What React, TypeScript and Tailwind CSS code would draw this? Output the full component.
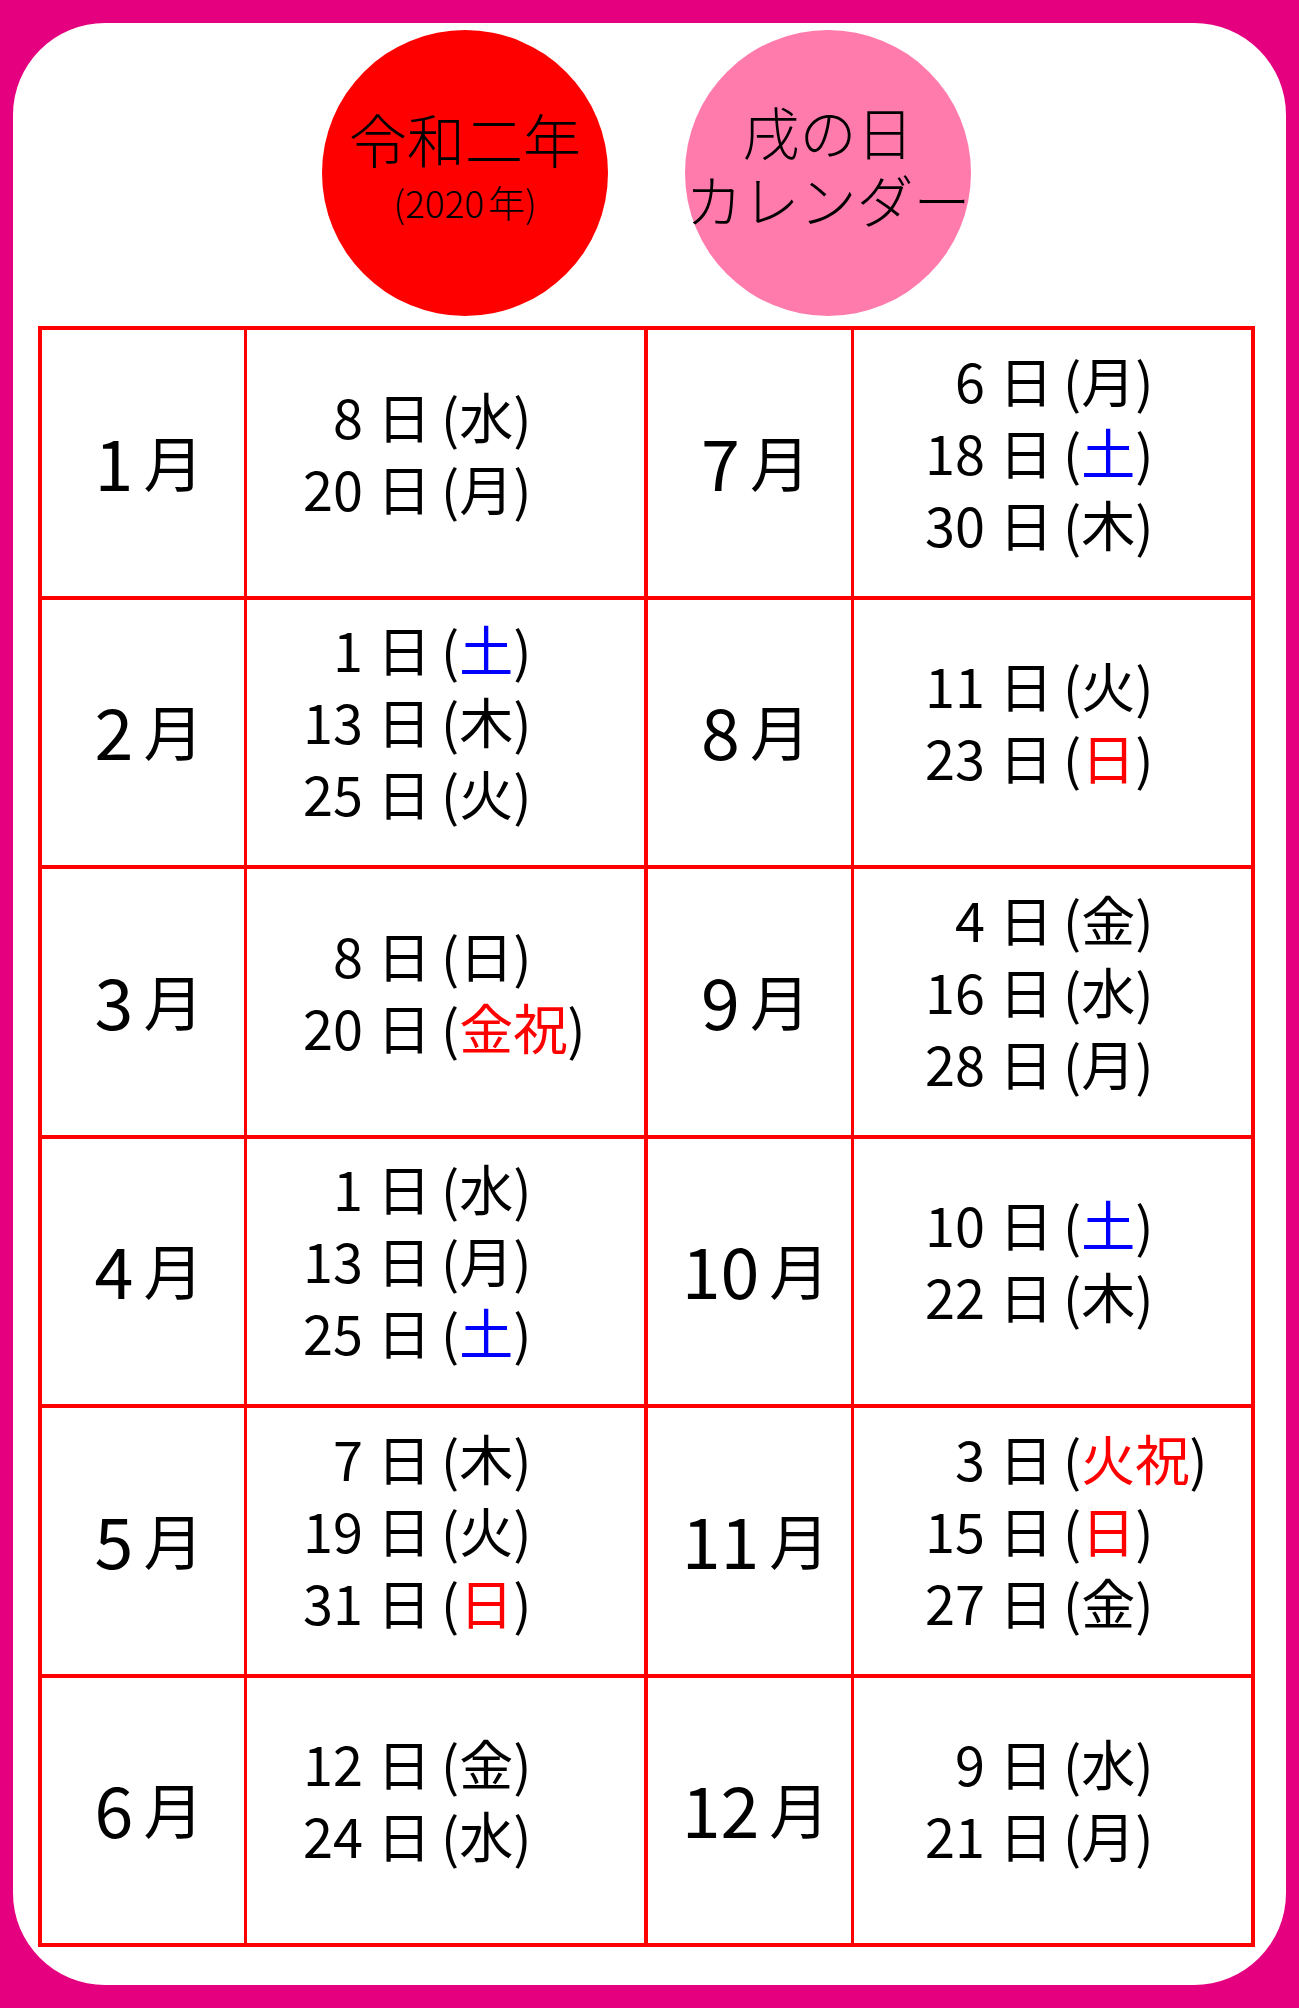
import React from "react";

type Day = { d: number; w: string; c?: "blue" | "red" };
type Month = { m: number; days: Day[] };

const left: Month[] = [
  { m: 1, days: [{ d: 8, w: "水" }, { d: 20, w: "月" }] },
  { m: 2, days: [{ d: 1, w: "土", c: "blue" }, { d: 13, w: "木" }, { d: 25, w: "火" }] },
  { m: 3, days: [{ d: 8, w: "日" }, { d: 20, w: "金祝", c: "red" }] },
  { m: 4, days: [{ d: 1, w: "水" }, { d: 13, w: "月" }, { d: 25, w: "土", c: "blue" }] },
  { m: 5, days: [{ d: 7, w: "木" }, { d: 19, w: "火" }, { d: 31, w: "日", c: "red" }] },
  { m: 6, days: [{ d: 12, w: "金" }, { d: 24, w: "水" }] },
];

const right: Month[] = [
  { m: 7, days: [{ d: 6, w: "月" }, { d: 18, w: "土", c: "blue" }, { d: 30, w: "木" }] },
  { m: 8, days: [{ d: 11, w: "火" }, { d: 23, w: "日", c: "red" }] },
  { m: 9, days: [{ d: 4, w: "金" }, { d: 16, w: "水" }, { d: 28, w: "月" }] },
  { m: 10, days: [{ d: 10, w: "土", c: "blue" }, { d: 22, w: "木" }] },
  { m: 11, days: [{ d: 3, w: "火祝", c: "red" }, { d: 15, w: "日", c: "red" }, { d: 27, w: "金" }] },
  { m: 12, days: [{ d: 9, w: "水" }, { d: 21, w: "月" }] },
];

const MonthCell = ({ m }: { m: number }) => (
  <div className="flex items-center justify-center pb-[4px] pl-[12px]">
    <span className="text-[70px] leading-none">{m}</span>
    <span className="ml-[10px] text-[60px] leading-none">月</span>
  </div>
);

const DaysCell = ({ days, numW }: { days: Day[]; numW: string }) => (
  <div className="flex flex-col justify-center pb-[22px]">
    {days.map((x) => (
      <div key={x.d} className="flex items-baseline h-[72px] leading-[72px]">
        <span className={`${numW} text-right text-[54px]`}>{x.d}</span>
        <span className="ml-[14px] text-[54px]">日</span>
        <span className="ml-[10px] text-[54px]">(</span>
        <span
          className={`text-[54px] ${
            x.c === "blue" ? "text-[#0000ff]" : x.c === "red" ? "text-[#ff0000]" : ""
          }`}
        >
          {x.w}
        </span>
        <span className="text-[54px]">)</span>
      </div>
    ))}
  </div>
);

export default function App() {
  return (
    <div className="w-[1299px] h-[2008px] bg-[#e4007f] px-[13px] py-[23px] font-['Noto_Sans_CJK_JP',sans-serif] text-black">
      <div className="h-full bg-white rounded-[92px] pt-[7px]">
        {/* header circles */}
        <div className="flex justify-center gap-[77px] pr-[6px]">
          <div className="w-[286px] h-[286px] rounded-full bg-[#ff0000] flex flex-col items-center justify-center pb-[14px]">
            <div className="text-[58px] font-light leading-[60px]">令和二年</div>
            <div className="mt-[12px] text-[37px] font-light leading-[44px]">
              (2020<span className="ml-[4px]">年</span>)
            </div>
          </div>
          <div className="w-[286px] h-[286px] rounded-full bg-[#ff7bac] flex flex-col items-center justify-center pb-[18px]">
            <div className="text-[57px] font-light leading-[68px]">戌の日</div>
            <div className="text-[57px] font-light leading-[68px] whitespace-nowrap">カレンダー</div>
          </div>
        </div>

        {/* table */}
        <div className="ml-[25px] mt-[10px] w-[1217px] border-4 border-[#ff0000]">
          {left.map((l, i) => {
            const r = right[i];
            return (
              <div
                key={l.m}
                className={`flex ${i === 0 ? "h-[265.5px]" : "h-[269.5px] border-t-4 border-[#ff0000]"}`}
              >
                <div className="w-[202px] flex items-center justify-center">
                  <MonthCell m={l.m} />
                </div>
                <div className="w-[400px] border-l-[3px] border-[#ff0000] flex">
                  <DaysCell days={l.days} numW="w-[116px]" />
                </div>
                <div className="w-[207px] border-l-4 border-[#ff0000] flex items-center justify-center">
                  <MonthCell m={r.m} />
                </div>
                <div className="w-[400px] border-l-[3px] border-[#ff0000] flex">
                  <DaysCell days={r.days} numW="w-[131px]" />
                </div>
              </div>
            );
          })}
        </div>
      </div>
    </div>
  );
}
